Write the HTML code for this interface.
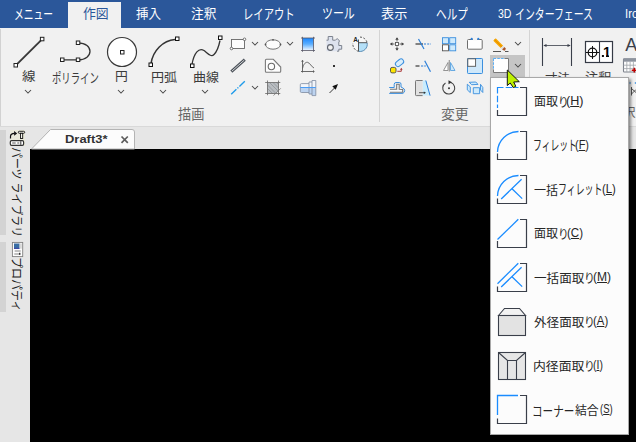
<!DOCTYPE html>
<html lang="ja"><head><meta charset="utf-8">
<style>
html,body{margin:0;padding:0}
body{width:636px;height:442px;overflow:hidden;position:relative;background:#e6e6e6;font-family:"Liberation Sans","Noto Sans CJK JP",sans-serif;}
.abs{position:absolute}
.t{position:absolute;white-space:nowrap;transform-origin:0 0;line-height:1;color:#3a3a3a}
#tabbar{left:0;top:0;width:636px;height:28px;background:#2b579a}
#acttab{left:68px;top:2px;width:53px;height:27px;background:#f1f1f1}
#ribbon{left:0;top:28px;width:636px;height:98px;background:#f1f1f1}
#ribline{left:0;top:126px;width:636px;height:1px;background:#d9d9d9}
#canvas{left:30px;top:149px;width:606px;height:293px;background:#000}
svg{position:absolute;left:0;top:0;overflow:visible}
#hl{left:490px;top:55px;width:35px;height:24px;background:#c5c5c5}
#menu{left:490px;top:77px;width:139px;height:358px;background:#fcfcfc;border:1px solid #a8a8a8;box-sizing:border-box;box-shadow:2px 2px 3px rgba(0,0,0,.45)}
.side{font-size:12px;color:#222;transform:rotate(90deg);transform-origin:0 0}
</style></head><body>
<div class="abs" id="tabbar"></div>
<div class="abs" id="acttab"></div>
<span class="t" style="left:13.6px;top:6.9px;font-size:14px;color:#fff;transform:scaleX(0.698)">メニュー</span>
<span class="t" style="left:82.5px;top:7.2px;font-size:13px;color:#2b579a;transform:scaleX(0.988)">作図</span>
<span class="t" style="left:136.3px;top:7.2px;font-size:13px;color:#fff;transform:scaleX(0.962)">挿入</span>
<span class="t" style="left:190.5px;top:7.2px;font-size:13px;color:#fff;transform:scaleX(0.973)">注釈</span>
<span class="t" style="left:242.78px;top:6.7px;font-size:14px;color:#fff;transform:scaleX(0.738)">レイアウト</span>
<span class="t" style="left:321.72px;top:6.2px;font-size:14px;color:#fff;transform:scaleX(0.78)">ツール</span>
<span class="t" style="left:381.19px;top:7.2px;font-size:13px;color:#fff;transform:scaleX(1.012)">表示</span>
<span class="t" style="left:435.54px;top:6.9px;font-size:14px;color:#fff;transform:scaleX(0.761)">ヘルプ</span>
<span class="t" style="left:498.3px;top:6.7px;font-size:13px;color:#fff;transform:scaleX(0.812)">3D</span>
<span class="t" style="left:515.09px;top:6.7px;font-size:14px;color:#fff;transform:scaleX(0.706)">インターフェース</span>
<span class="t" style="left:625.43px;top:6.7px;font-size:13px;color:#fff;transform:scaleX(0.871)">Iro</span>
<div class="abs" id="ribbon"></div>
<div class="abs" id="ribline"></div>
<div class="abs" style="left:0;top:130px;width:6px;height:105px;background:#d3d3d3"></div>
<div class="abs" style="left:0;top:242px;width:6px;height:70px;background:#d3d3d3"></div>
<div class="abs" style="left:0;top:29px;width:1px;height:97px;background:#d2d2d2"></div>
<span class="t" style="left:22.0px;top:71.4px;font-size:12.5px;color:#3b3b3b;transform:scaleX(1.083)">線</span>
<span class="t" style="left:51.81px;top:71.7px;font-size:13.5px;color:#3b3b3b;transform:scaleX(0.694)">ポリライン</span>
<span class="t" style="left:114.67px;top:70.7px;font-size:12.5px;color:#3b3b3b;transform:scaleX(1.027)">円</span>
<span class="t" style="left:150.85px;top:71.7px;font-size:12.5px;color:#3b3b3b;transform:scaleX(1.046)">円弧</span>
<span class="t" style="left:192.96px;top:71.7px;font-size:12.5px;color:#3b3b3b;transform:scaleX(1.042)">曲線</span>
<span class="t" style="left:544.6px;top:72.6px;font-size:12.5px;color:#3b3b3b;transform:scaleX(1.008)">寸法</span>
<span class="t" style="left:585.25px;top:72.2px;font-size:12.5px;color:#3b3b3b;transform:scaleX(1.05)">注釈</span>
<span class="t" style="left:178.2px;top:107.7px;font-size:13.3px;color:#666;transform:scaleX(0.992)">描画</span>
<span class="t" style="left:440.96px;top:107.8px;font-size:13.3px;color:#666;transform:scaleX(1.04)">変更</span>
<span class="t" style="left:625.3px;top:35.7px;font-size:18px;color:#3a3f4a;transform:scaleX(1.0)">A</span>
<span class="t" style="left:623px;top:107px;font-size:12.5px;color:#666">択</span>
<div class="abs" id="canvas"></div>
<div class="abs" id="hl"></div>
<svg id="ico" width="636" height="442" viewBox="0 0 636 442" fill="none">
<!-- big icons -->
<g stroke="#3a3a3a" stroke-width="1.900" stroke-linecap="round">
<path d="M16.300 64.800 L41.700 39.600"/>
</g>
<g stroke="#222" stroke-width="1" fill="#fff">
<rect x="14" y="63.500" width="3.500" height="3.500"/><rect x="40.400" y="37.300" width="3.500" height="3.500"/>
</g>
<!-- polyline -->
<path d="M62 59.800 H78 C94 59.800 94 42.800 78 42.800" stroke="#333" stroke-width="1.300"/>
<g stroke="#222" fill="#fff"><rect x="60.500" y="58" width="3.500" height="3.500"/><rect x="76.300" y="58" width="3.500" height="3.500"/><rect x="76.300" y="41" width="3.500" height="3.500"/></g>
<!-- circle -->
<circle cx="122" cy="52" r="14.500" fill="#fff" stroke="#3a3a3a" stroke-width="1.200"/>
<rect x="120.500" y="50.500" width="3.500" height="3.500" fill="#fff" stroke="#222"/>
<!-- arc -->
<path d="M151 63.500 C153 50.500 163 40.500 175 39.500" stroke="#333" stroke-width="1.500"/>
<g stroke="#111" fill="#fff"><rect x="149" y="63" width="3.500" height="3.500"/><rect x="175.500" y="37" width="3.500" height="3.500"/></g>
<!-- curve -->
<path d="M192 64.500 C194 52.500 199 47.500 204 50.500 C208 53.500 211 57.500 214 54.500 C218 50.500 219 45.500 220 40.500" stroke="#333" stroke-width="1.300"/>
<g stroke="#111" fill="#fff"><rect x="190.500" y="64" width="3.500" height="3.500"/><rect x="218.500" y="36" width="3.500" height="3.500"/></g>
<!-- chevrons under big buttons -->
<g stroke="#484848" stroke-width="1.050">
<path d="M25 90 l3 3 l3 -3"/><path d="M118 90 l3 3 l3 -3"/><path d="M160 90 l3 3 l3 -3"/><path d="M202 90 l3 3 l3 -3"/>
<path d="M252 42 l3 3 l3 -3"/><path d="M287 42 l3 3 l3 -3"/><path d="M252 86 l3 3 l3 -3"/>
<path d="M515 42 l3 3 l3 -3"/><path d="M515 64 l3 3 l3 -3"/>
</g>
<!-- rect icon -->
<rect x="231.500" y="39.500" width="13" height="9" fill="#fdfdfd" stroke="#666" stroke-width=".9"/>
<circle cx="231.500" cy="48.500" r="1.300" fill="#fff" stroke="#555" stroke-width=".8"/><circle cx="244.500" cy="39.300" r="1.300" fill="#fff" stroke="#555" stroke-width=".8"/>
<!-- ellipse -->
<ellipse cx="273" cy="44.500" rx="7.500" ry="4.700" fill="#fdfdfd" stroke="#686868" stroke-width=".9"/>
<g fill="#555"><circle cx="273" cy="39.800" r=".9"/><circle cx="265.500" cy="44.500" r=".9"/><circle cx="280.500" cy="44.500" r=".9"/></g>
<!-- blue gradient square -->
<defs><linearGradient id="bg1" x1="0" y1="0" x2="0" y2="1"><stop offset="0" stop-color="#1a86ff"/><stop offset=".5" stop-color="#5aaeff"/><stop offset="1" stop-color="#e6f2ff"/></linearGradient></defs>
<rect x="302.500" y="38" width="11" height="12" fill="url(#bg1)"/>
<path d="M301 38 H315 M301 50.500 H315 M302.500 36.800 V51.800 M313.500 36.800 V51.800" stroke="#556" stroke-width=".8"/>
<!-- double line -->
<path d="M231.300 71.600 L244.800 59.700" stroke="#4a5058" stroke-width="2.900"/><path d="M231.800 71.200 L244.300 60.100" stroke="#d4d6d8" stroke-width="1"/>
<!-- shape with circle -->
<path d="M266.400 59.300 H273.300 L280.700 67 V71.300 Q280.700 72.300 279.700 72.300 H266.400 Q265.400 72.300 265.400 71.300 V60.300 Q265.400 59.300 266.400 59.300 Z" fill="#fdfdfd" stroke="#7a7a7a" stroke-width="1.100"/>
<circle cx="271.400" cy="66.500" r="3.200" fill="#fdfdfd" stroke="#6a6a6a" stroke-width="1.100"/>
<!-- graph -->
<path d="M302.500 60 V72.500 M301 71.500 H314.500" stroke="#5a5a5a" stroke-width=".9"/>
<path d="M302.500 68.600 C303.500 63.500 306 62 307.500 62.300 C310 62.800 311.500 67 314 68" stroke="#5a5a5a" stroke-width=".9"/>
<path d="M301.300 61.300 h2.400 M313.500 70.300 v2.400" stroke="#5a5a5a" stroke-width=".8"/>
<!-- blue dash-dot line -->
<path d="M231.200 94.200 L236.400 89.300 M237.400 88.300 L238.400 87.400 M239.400 86.400 L244.800 81.300" stroke="#1e9bea" stroke-width="1.400"/>
<!-- hatch square -->
<path d="M267.500 82.500 H278.500 V89 A4.500 4.500 0 0 1 274 93.500 H267.500 Z" fill="#b9bdc1"/>
<path d="M267.500 85 l8 8 M267.500 88.500 l5 5 M269.500 82.500 l9 9 M273 82.500 l5.500 5.500 M276.500 82.500 l2 2" stroke="#8a8f94" stroke-width=".7"/>
<path d="M265.200 82.500 H280.300 M265.200 93.500 H280.300 M267.500 80.500 V95.200 M278.500 80.500 V95.200" stroke="#666" stroke-width=".8"/>
<path d="M273.500 95.600 L280.800 88.300" stroke="#777" stroke-width=".8"/>
<!-- 3d part -->
<path d="M301.500 83.600 H309 V82 H312 V80.500 H315.800 V87.500 H300.300 V84.800 Q300.300 83.600 301.500 83.600 Z" fill="#f2f5fa"/>
<path d="M300.300 87.500 H315.800 V95.600 H312 V94 H309 V92.500 H301.500 Q300.300 92.500 300.300 91.300 Z" fill="#bcd3f0"/>
<path d="M301.500 83.600 H309 V82 H312 V80.500 H315.800 V95.600 H312 V94 H309 V92.500 H301.500 Q300.300 92.500 300.300 91.300 V84.800 Q300.300 83.600 301.500 83.600 Z M309 83.600 V92.500 M312 82 V94" stroke="#7d8aa0" stroke-width=".8"/>
<path d="M300.300 87.500 H315.800" stroke="#4a9cf5" stroke-width="1"/>
<!-- puzzle -->
<path d="M326.500 40.200 H328.200 V36.500 H332.700 V40.200 H335.500 L337.200 38.500 L339.600 41 L338.800 42 V45.500 H341.700 V49.200 H338.800 V51.200 H326.500 Z" fill="#dde2ee"/>
<path d="M326.500 40.200 H328.200 V36.500 H332.700 V40.200 H335.500 L337.200 38.500 L339.600 41 L338.800 42 V45.500 H341.700 V49.200 H338.800 V51.200 H337" stroke="#7d838f" stroke-width="1" stroke-linejoin="round"/>
<circle cx="330.400" cy="47.500" r="2.900" fill="#f1f1f1" stroke="#5f646d" stroke-width="1.100"/>
<!-- A pie -->
<circle cx="360.100" cy="44.300" r="7.200" fill="#f7f7f7"/>
<path d="M358.500 42.700 H367.100 A7.200 7.200 0 0 1 358.500 51.300 Z" fill="#b5e0f8"/>
<path d="M367.100 42.700 A7.200 7.200 0 0 1 358.500 51.300" stroke="#5a8db5" stroke-width="1"/>
<path d="M358.500 39.500 V51.300 M358.500 42.700 H367.100" stroke="#444" stroke-width=".9"/>
<path d="M358.500 51.300 A7.200 7.200 0 0 1 353 43" stroke="#444" stroke-width=".9" stroke-dasharray="2 1.500"/>
<path d="M360 37.100 A7.200 7.200 0 0 1 367.100 42.700" stroke="#444" stroke-width=".9" stroke-dasharray="2 1.500"/>
<text x="353.200" y="41.500" font-family="Liberation Sans,sans-serif" font-size="6.500" font-weight="bold" fill="#222">A</text>
<!-- dot -->
<rect x="333" y="65" width="2" height="2" fill="#333"/>
<!-- arrow -->
<path d="M329.500 93 L335 87.500" stroke="#222" stroke-width=".9"/><path d="M338 84 L332.300 86.300 L335.700 89.700 Z" fill="#111"/>
<!-- separators -->
<path d="M379.500 30 V122 M529.500 30 V122" stroke="#d4d4d4"/>
<!-- move -->
<g stroke="#555" stroke-width=".9"><path d="M390.500 44 H394.500 M399.500 44 H403.500 M397 38 V41.500 M397 46.500 V50"/><rect x="395.500" y="42.500" width="3" height="3" fill="#fff"/></g>
<g fill="#444"><path d="M397 37.300 l1.700 2.400 h-3.400 z M397 50.700 l1.700 -2.400 h-3.400 z M390 44 l2.400 -1.700 v3.400 z M404 44 l-2.400 -1.700 v3.400 z"/></g>
<!-- trim -->
<path d="M415.500 44 H423" stroke="#444" stroke-width="1.300"/><path d="M424 44 H431" stroke="#2b7fd9" stroke-width="1.200" stroke-dasharray="2 1.200"/><path d="M418.500 39 L424 49" stroke="#2b7fd9" stroke-width="1.200"/>
<!-- grid -->
<g fill="#cfeafc" stroke="#3b8fde" stroke-width=".9"><rect x="442.500" y="37.700" width="6" height="6"/><rect x="449.700" y="37.700" width="6" height="6"/><rect x="449.700" y="44.800" width="6" height="6"/></g>
<rect x="442.500" y="44.800" width="6" height="6" fill="#fff" stroke="#555" stroke-width=".9"/>
<!-- stretch box -->
<rect x="467.500" y="39.500" width="14.700" height="9.700" rx="1" fill="#fff" stroke="#6e6e6e"/>
<path d="M472.800 39.500 H477.300" stroke="#f1f1f1" stroke-width="1.500"/><circle cx="471.700" cy="38.900" r="1.100" fill="#2b7fd9"/><circle cx="478.300" cy="38.900" r="1.100" fill="#2b7fd9"/>
<!-- pencil -->
<path d="M493.300 40.700 L495.700 38.300 L503.100 45.700 L500.700 48.100 Z" fill="#f7a600"/>
<path d="M494.500 39.500 L501.900 46.900" stroke="#e08a00" stroke-width=".8"/>
<path d="M500.700 48.100 L503.100 45.700 L504.500 47.100 L502.100 49.500 Z" fill="#dedede"/>
<path d="M502.100 49.500 L504.500 47.100 L505.500 48.300 Q506 50.300 504.300 50.800 Z" fill="#a8562a"/>
<path d="M493 51.500 H501 M505 51.500 H508.500" stroke="#555" stroke-width="1"/>
<!-- yellow circle + pill -->
<rect x="390.500" y="67.400" width="5.500" height="5.500" rx="1.600" fill="#ffe600" stroke="#4a4a4a" stroke-width=".9"/>
<rect x="395" y="60.100" width="9" height="5.300" rx="2.650" transform="rotate(-38 399.500 62.700)" fill="#d8edfb" stroke="#3b8fde" stroke-width="1"/>
<path d="M397.300 71.300 H401.300 V69.300" stroke="#a52a2a" stroke-width=".9"/><path d="M401.300 67.800 l1.300 1.900 h-2.600 z" fill="#a52a2a"/>
<!-- extend -->
<path d="M415.500 66 H419.500" stroke="#444" stroke-width="1.300"/><path d="M421 66 H423.200 M424.200 66 H425.800" stroke="#2b7fd9" stroke-width="1.200"/><path d="M424.700 60.800 L430.500 71.700" stroke="#2b7fd9" stroke-width="1.200"/>
<!-- mirror -->
<path d="M448 62.500 V70.500 H443.500 Z" fill="#fff" stroke="#888" stroke-width=".9"/><path d="M450.500 62.500 V70.500 H455 Z" fill="#cfe8fa" stroke="#5aa3e0" stroke-width=".9"/><path d="M449.300 60 V71.500" stroke="#999" stroke-width="1.200"/>
<!-- scale -->
<rect x="467.500" y="58.500" width="15" height="15" rx=".8" fill="#cfe8fa" stroke="#3b8fde"/><rect x="467.800" y="58.800" width="7.800" height="7.500" fill="#fff" stroke="#555" stroke-width=".9"/>
<!-- offset/sweep -->
<path d="M390 89.200 H396.700 V84.200 H399.200 V89.200 L402.700 89.400 V92.200 H390 Z" fill="#fcfcfc"/>
<path d="M390 89.200 H396.700 V84.200 H399.200 V89.200 L402.700 89.400 V92.200 H390" stroke="#777" stroke-width="1.100"/>
<path d="M389.200 87.500 H394.200 V84.500 Q394.200 82.500 396 82.500 H399.400 Q401 82.500 401 84.200 V87 L402.900 88 Q404.800 89 404.700 90.400 Q404.700 92.500 402.900 93.400 H389.200" stroke="#3b8fde" stroke-width="1"/>
<!-- stretch2 -->
<path d="M422.600 80.500 H425.800 L430.100 95.600 H422.600 Z" fill="#c8ecfd"/>
<path d="M425.800 80.500 L430.100 95.600" stroke="#2b7fd9" stroke-width="1"/>
<rect x="415.500" y="80.500" width="7.100" height="15" fill="#e1e1e1"/><path d="M422.600 80.500 H416.300 Q415.500 80.500 415.500 81.300 V94.800 Q415.500 95.600 416.300 95.600 H422.600" stroke="#777" stroke-width="1"/>
<path d="M419 92.700 H424.500" stroke="#333" stroke-width=".8"/><path d="M426 92.700 l-2.200 -1.300 v2.600 z" fill="#333"/>
<!-- rotate -->
<path d="M451 82.500 A6 6 0 1 1 445.500 83" stroke="#444" stroke-width="1.100"/><path d="M452 82.300 L448.500 80.300 V84.300 Z" fill="#333"/><circle cx="449" cy="88.300" r="1" fill="#333"/>
<!-- 3d box -->
<g fill="#cdeafc" stroke="#3b8fde" stroke-width=".9" stroke-linejoin="round">
<path d="M469.200 82.300 L475.800 82 L478 84.400 L471.700 84.700 Z"/>
<path d="M467.300 84.200 L470.300 86.900 V92.600 L467.300 89.900 Z"/>
<rect x="473.300" y="87.700" width="6.300" height="6"/>
<path d="M480.500 84.300 L482.800 87.500 V92.500 L480.500 90 Z"/>
</g>
<!-- small chamfer icon -->
<rect x="493.500" y="58.500" width="15" height="14" fill="#fff"/>
<path d="M493.500 58.500 H504" stroke="#5aaef5" stroke-width="1" stroke-dasharray="2.500 1.300"/><path d="M493.500 58.500 V69" stroke="#5aaef5" stroke-width="1" stroke-dasharray="2.500 1.300"/>
<path d="M504.500 58.500 H508.500 V72.500 H493.500 V69.500" stroke="#7a7a7a" stroke-width="1"/>
<!-- dimension -->
<path d="M542.500 38 V66 M571.500 38 V66" stroke="#3a3f4a" stroke-width="1.100"/><path d="M544 45.500 H570" stroke="#3a3f4a" stroke-width=".8"/>
<path d="M543.300 45.500 l3.200 -1.600 v3.200 z M570.700 45.500 l-3.200 -1.600 v3.200 z" fill="#3a3f4a"/>
<!-- annotation box -->
<rect x="585.500" y="41.500" width="27" height="21" fill="#fff" stroke="#353a45" stroke-width="1.200"/><path d="M599.500 41.500 V62.500" stroke="#353a45" stroke-width="1.100"/>
<circle cx="592.500" cy="52.500" r="4.300" stroke="#111" stroke-width="1.200"/><path d="M586 52.500 H599 M592.500 46 V59" stroke="#111" stroke-width="1"/>
<rect x="601.900" y="55" width="2" height="2" fill="#0a0a0a"/>
<!-- table icon -->
<rect x="623.500" y="58.700" width="14" height="13.300" rx=".8" fill="#fdfdfd" stroke="#7d828c" stroke-width="1.100"/><rect x="623.500" y="58.700" width="14" height="3" fill="#8d939e"/>
<path d="M626.800 61.700 V72 M630.100 61.700 V72 M633.400 61.700 V72 M623.500 65.200 H637 M623.500 68.600 H637" stroke="#a0a4aa" stroke-width=".8"/>
<path d="M631.700 70.200 H636 M634.300 67.800 V72.500" stroke="#c00000" stroke-width="1.500"/>
<!-- side icons -->
<rect x="10" y="130" width="15" height="16" fill="#e9e9d9"/>
<path d="M10.500 138.600 V136.500 C10.500 134.500 12 133.400 14.500 133.400" stroke="#111" stroke-width="1.200"/>
<path d="M14.100 131.100 L17.200 133.400 L14.100 135.700 Z" fill="#111"/>
<rect x="18.300" y="131.300" width="6.400" height="2" rx="1" fill="#f4f4ec" stroke="#111" stroke-width=".9"/>
<rect x="20.500" y="133.300" width="2.200" height="5.200" fill="#f4f4ec" stroke="#111" stroke-width=".9"/>
<rect x="10.300" y="140.700" width="13.300" height="4.600" rx="1.300" fill="#fff" stroke="#333" stroke-width="1.200"/>
<path d="M12.200 143 H15.700 M17.300 143 H19.300" stroke="#555" stroke-width="1"/><path d="M20.800 141.200 V144.800" stroke="#333" stroke-width="1"/>
<rect x="12.400" y="242.400" width="10.300" height="14.200" fill="#fdfdfd" stroke="#808080" stroke-width=".9"/>
<rect x="14" y="243.500" width="5.600" height="5.200" fill="#3a6ea5"/><path d="M14 248.400 H19.600" stroke="#2a2a9a" stroke-width=".8"/>
<rect x="19.600" y="243.500" width="2.200" height="5.200" fill="#d8d8d8"/>
<path d="M14.700 251 H20.700 M14.300 254 H20.200" stroke="#666" stroke-width=".8"/><rect x="19" y="252.800" width="1.400" height="2" fill="#333"/>
<!-- fragment right of menu -->
<path d="M629.500 83 h1.200 M634.800 83 h1.200" stroke="#3b8fde" stroke-width="1.500"/>
<path d="M631.500 87 V95.500 M631.500 88.500 L636 92.500 M631.500 94 L636 89.500" stroke="#444" stroke-width=".9"/>

<!-- doc tab -->
<path d="M31.500 149 L50.500 129.500 H132 Q134.500 129.500 134.500 132 V149 Z" fill="#fcfcfc" stroke="#b4b4b4"/>
<path d="M121.500 136.500 l6.300 6.300 m0 -6.300 l-6.300 6.300" stroke="#5e5e5e" stroke-width="1.700"/>
</svg>
<span class="t" style="left:602.6px;top:45.4px;font-size:54px;color:#050505;font-weight:bold;transform:scale(0.26,0.27)">1</span>
<div class="abs" style="left:603.9px;top:55px;width:2px;height:2.2px;background:#fff"></div><div class="abs" style="left:609px;top:55px;width:2px;height:2.2px;background:#fff"></div>
<span class="t" style="left:64.7px;top:133.6px;font-size:11.8px;color:#333;font-weight:bold;transform:scaleX(1.097)">Draft3*</span>
<span class="t" style="left:21.5px;top:146.5px;font-size:12px;color:#222;transform:rotate(90deg) scaleX(.91)">パーツ ライブラリ</span>
<span class="t" style="left:21.5px;top:257.3px;font-size:12px;color:#222;transform:rotate(90deg) scaleX(.92)">プロパティ</span>
<div class="abs" id="menu"></div>
<span class="t" style="left:534.0px;top:95.7px;font-size:12px;color:#262626;transform:scaleX(1.004)">面取</span>
<span class="t" style="left:557.93px;top:97.2px;font-size:12px;color:#262626;transform:scaleX(0.887)">り</span>
<span class="t" style="left:566.45px;top:94.7px;font-size:12px;color:#262626;transform:scaleX(1.047)">(<u>H</u>)</span>
<span class="t" style="left:532.74px;top:138.2px;font-size:14px;color:#262626;transform:scaleX(0.629)">フィレット</span>
<span class="t" style="left:575.39px;top:138.7px;font-size:12px;color:#262626;transform:scaleX(0.907)">(<u>F</u>)</span>
<span class="t" style="left:534.0px;top:184.7px;font-size:12px;color:#262626;transform:scaleX(1.004)">一括</span>
<span class="t" style="left:558.43px;top:182.2px;font-size:14px;color:#262626;transform:scaleX(0.636)">フィレット</span>
<span class="t" style="left:601.55px;top:182.7px;font-size:12px;color:#262626;transform:scaleX(0.946)">(<u>L</u>)</span>
<span class="t" style="left:534.0px;top:227.7px;font-size:12px;color:#262626;transform:scaleX(1.004)">面取</span>
<span class="t" style="left:557.93px;top:229.2px;font-size:12px;color:#262626;transform:scaleX(0.887)">り</span>
<span class="t" style="left:566.54px;top:226.7px;font-size:12px;color:#262626;transform:scaleX(0.96)">(<u>C</u>)</span>
<span class="t" style="left:534.0px;top:272.7px;font-size:12px;color:#262626;transform:scaleX(1.048)">一括面取</span>
<span class="t" style="left:584.0px;top:273.2px;font-size:12px;color:#262626;transform:scaleX(0.9)">り</span>
<span class="t" style="left:592.79px;top:270.7px;font-size:12px;color:#262626;transform:scaleX(1.006)">(<u>M</u>)</span>
<span class="t" style="left:534.0px;top:316.7px;font-size:12px;color:#262626;transform:scaleX(1.048)">外径面取</span>
<span class="t" style="left:584.0px;top:317.2px;font-size:12px;color:#262626;transform:scaleX(0.9)">り</span>
<span class="t" style="left:592.85px;top:314.7px;font-size:12px;color:#262626;transform:scaleX(0.947)">(<u>A</u>)</span>
<span class="t" style="left:532.93px;top:360.7px;font-size:12px;color:#262626;transform:scaleX(1.07)">内径面取</span>
<span class="t" style="left:584.0px;top:361.2px;font-size:12px;color:#262626;transform:scaleX(0.9)">り</span>
<span class="t" style="left:592.93px;top:358.7px;font-size:12px;color:#262626;transform:scaleX(0.87)">(<u>I</u>)</span>
<span class="t" style="left:531.69px;top:403.9px;font-size:14px;color:#262626;transform:scaleX(0.755)">コーナー</span>
<span class="t" style="left:574.8px;top:404.7px;font-size:12px;color:#262626;transform:scaleX(0.988)">結合</span>
<span class="t" style="left:600.11px;top:402.7px;font-size:12px;color:#262626;transform:scaleX(0.793)">(<u>S</u>)</span>
<svg id="mico" width="636" height="442" viewBox="0 0 636 442" fill="none">
<g stroke-width="1.200" fill="none">
<!-- 1 -->
<path d="M497 87.500 H518.500" stroke="#1a8cff" stroke-dasharray="6.500 2.200"/><path d="M497.500 87 V108" stroke="#1a8cff" stroke-dasharray="6.500 2.200"/>
<path d="M520 87.500 H526.500 V115.500 H497.500 V110" stroke="#3a3f4a"/>
<!-- 2 -->
<path d="M497.500 152 A21 21 0 0 1 518.500 131.500" stroke="#1a8cff" stroke-width="1.300"/>
<path d="M520 131.500 H526.500 V159.500 H497.500 V153.500" stroke="#3a3f4a"/>
<!-- 3 -->
<path d="M497.500 196 A21 21 0 0 1 518.500 175.500" stroke="#1a8cff" stroke-width="1.300"/>
<path d="M501.200 199 L521.600 179.300 M512 188.800 L522.200 198.600" stroke="#1a8cff" stroke-width="1.300"/>
<path d="M520 175.500 H526.500 V203.500 H497.500 V198.500" stroke="#3a3f4a"/>
<!-- 4 -->
<path d="M497.500 239.500 L518.300 219.300" stroke="#1a8cff" stroke-width="1.300"/>
<path d="M520 219.500 H526.500 V247.500 H497.500 V241" stroke="#3a3f4a"/>
<!-- 5 -->
<path d="M497.500 283.700 L518.300 263.300" stroke="#1a8cff" stroke-width="1.300"/>
<path d="M501.200 287 L521.600 267.300 M512 276.800 L522.200 286.600" stroke="#1a8cff" stroke-width="1.300"/>
<path d="M520 263.500 H526.500 V291.500 H497.500 V286.500" stroke="#3a3f4a"/>
<!-- 6 -->
<path d="M498.500 315.500 L504.500 308.500 H519.500 L525.500 315.500 Z" fill="#f2f2f2" stroke="#3a3f4a" stroke-width="1.100"/>
<rect x="498.500" y="315.500" width="27" height="20" fill="#e3e3e3" stroke="#3a3f4a" stroke-width="1.100"/>
<!-- 7 -->
<rect x="498.500" y="352.500" width="27" height="27" fill="#e6e6e6" stroke="#3a3f4a" stroke-width="1.100"/>
<path d="M498.500 352.500 L507.500 360.500 H516.500 L525.500 352.500 M507.500 360.500 V379.500 M516.500 360.500 V379.500" stroke="#3a3f4a" stroke-width="1.100"/>
<!-- 8 -->
<path d="M497.500 415 V395.500 H518" stroke="#1a8cff" stroke-width="1.300"/>
<path d="M520 395.500 H526.500 V423.500 H497.500 V418.500" stroke="#3a3f4a"/>
</g>
<!-- cursor -->
<path d="M507.300 70 V85.600 L510.200 83 L513.300 87.600 L515.800 86.300 L513.700 82 L519.300 81.700 Z" fill="#bdf000" stroke="#111" stroke-width="1" stroke-linejoin="miter"/>
</svg>
</body></html>
